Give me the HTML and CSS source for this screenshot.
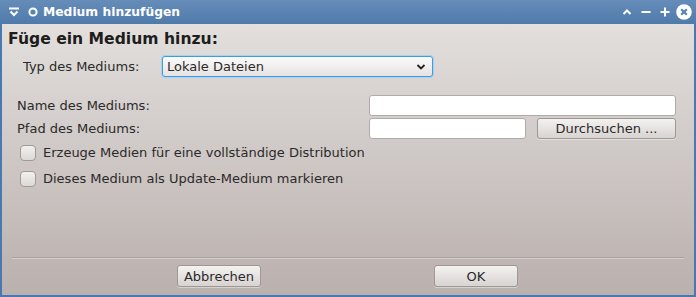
FILE: index.html
```html
<!DOCTYPE html>
<html lang="de">
<head>
    <meta charset="UTF-8">
    <title>Medium hinzufügen</title>
    <link rel="stylesheet" href="styles.css">
</head>
<body>
    <div class="window">
        <div class="titlebar">
            <div class="title-left">
                <svg class="tb-icon" width="12" height="12" viewBox="0 0 12 12">
                    <path d="M1 2.5h10" stroke="#fff" stroke-width="2"/>
                    <path d="M2.5 5.5l3.5 3.5l3.5-3.5" stroke="#fff" stroke-width="2" fill="none"/>
                </svg>
                <svg class="tb-icon" width="12" height="12" viewBox="0 0 12 12">
                    <circle cx="6" cy="6" r="3.6" stroke="#fff" stroke-width="2" fill="none"/>
                </svg>
                <span class="title">Medium hinzufügen</span>
            </div>
            <div class="title-right">
                <svg width="12" height="12" viewBox="0 0 12 12">
                    <path d="M2.5 8l3.5-3.5l3.5 3.5" stroke="#fff" stroke-width="2" fill="none"/>
                </svg>
                <svg width="12" height="12" viewBox="0 0 12 12">
                    <path d="M1.5 6h9" stroke="#fff" stroke-width="2"/>
                </svg>
                <svg width="12" height="12" viewBox="0 0 12 12">
                    <path d="M1.5 6h9M6 1.5v9" stroke="#fff" stroke-width="2"/>
                </svg>
                <svg class="close" width="16" height="16" viewBox="0 0 16 16">
                    <circle cx="8" cy="8" r="7.8" fill="#fff"/>
                    <path d="M5.2 5.2l5.6 5.6M10.8 5.2l-5.6 5.6" stroke="#5a82b2" stroke-width="2.2"/>
                </svg>
            </div>
        </div>
        <div class="content">
            <h1 class="heading">Füge ein Medium hinzu:</h1>

            <div class="type-row">
                <span class="type-label">Typ des Mediums:</span>
                <div class="combo">
                    <span>Lokale Dateien</span>
                    <svg width="10" height="8" viewBox="0 0 10 8">
                        <path d="M1.5 2l3.5 3.5l3.5-3.5" stroke="#222" stroke-width="1.8" fill="none"/>
                    </svg>
                </div>
            </div>

            <div class="form">
                <span class="label">Name des Mediums:</span>
                <div class="field wide"></div>
                <span class="label">Pfad des Mediums:</span>
                <div class="path-row">
                    <div class="field short"></div>
                    <button class="btn browse">Durchsuchen ...</button>
                </div>
            </div>

            <label class="check">
                <span class="box"></span>
                Erzeuge Medien für eine vollständige Distribution
            </label>
            <label class="check">
                <span class="box"></span>
                Dieses Medium als Update-Medium markieren
            </label>

            <div class="spacer"></div>
            <div class="separator"></div>
            <div class="actions">
                <button class="btn action">Abbrechen</button>
                <button class="btn action">OK</button>
            </div>
        </div>
    </div>
</body>
</html>
```
FILE: styles.css
```css
body {
    margin: 0;
    font-family: 'DejaVu Sans', 'Liberation Sans', sans-serif;
    font-size: 13px;
    color: #2b2a29;
}
.window {
    width: 696px;
    height: 297px;
    box-sizing: border-box;
    display: flex;
    flex-direction: column;
    border: 2px solid #4a78b0;
    border-top: none;
}
.titlebar {
    height: 24px;
    margin: 0 -2px;
    padding: 0 8px;
    display: flex;
    align-items: center;
    justify-content: space-between;
    background: linear-gradient(#668db9, #4f7aab);
    color: white;
}
.title-left,
.title-right {
    display: flex;
    align-items: center;
}
.title-left .tb-icon:first-child {
    margin-right: 7px;
}
.title-left .tb-icon + .tb-icon {
    margin-right: 4px;
}
.title {
    font-weight: bold;
    font-size: 12.3px;
}
.title-right {
    gap: 7px;
    margin-right: -4px;
}
.title-right .close {
    margin-left: -2px;
}
.content {
    flex: 1;
    display: flex;
    flex-direction: column;
    padding: 0 0 0 6px;
    background: linear-gradient(#e2dfdd, #bab0ad);
}
.heading {
    margin: 5px 0 0;
    font-size: 15.6px;
    font-weight: bold;
    line-height: 20px;
    color: #1e1d1c;
}
.type-row {
    display: flex;
    align-items: center;
    margin-top: 7px;
    padding-left: 15px;
}
.type-label {
    width: 139px;
}
.combo {
    width: 259px;
    height: 19px;
    padding: 0 6px 0 4px;
    display: flex;
    align-items: center;
    justify-content: space-between;
    border: 1px solid #3f9be3;
    border-radius: 3px;
    box-shadow: 0 0 0 1px #a8d0f0;
    background: linear-gradient(#fbfafa, #e6e3e2);
}
.form {
    display: grid;
    grid-template-columns: 352px 307px;
    row-gap: 2px;
    align-items: center;
    margin-top: 18px;
    padding-left: 9px;
}
.field {
    height: 19px;
    border: 1px solid #b0aba8;
    border-radius: 3px;
    background: white;
}
.path-row {
    display: flex;
    align-items: center;
    justify-content: space-between;
}
.field.short {
    width: 155px;
}
.btn {
    font-family: inherit;
    font-size: 13px;
    color: #2b2a29;
    height: 21px;
    padding: 0;
    border: 1px solid #9e9894;
    border-radius: 3px;
    background: linear-gradient(#f4f2f1, #d7d3d1);
    box-shadow: 0 1px 0 rgba(255, 255, 255, 0.4);
}
.browse {
    width: 139px;
}
.check {
    display: flex;
    align-items: center;
    gap: 7px;
    margin-left: 12px;
    height: 17px;
}
.check:first-of-type {
    margin-top: 5px;
}
.check + .check {
    margin-top: 9px;
}
.box {
    width: 14px;
    height: 14px;
    border: 1px solid #a19b98;
    border-radius: 4px;
    background: linear-gradient(#f2f0ef, #dcd8d6);
}
.spacer {
    flex: 1;
}
.separator {
    height: 1px;
    margin: 0 10px 0 4px;
    background: #a9a19e;
    box-shadow: 0 1px 0 rgba(255, 255, 255, 0.35);
}
.actions {
    display: flex;
    padding: 7px 0 8px 169px;
    gap: 173px;
}
.action {
    width: 84px;
    height: 22px;
}
```
